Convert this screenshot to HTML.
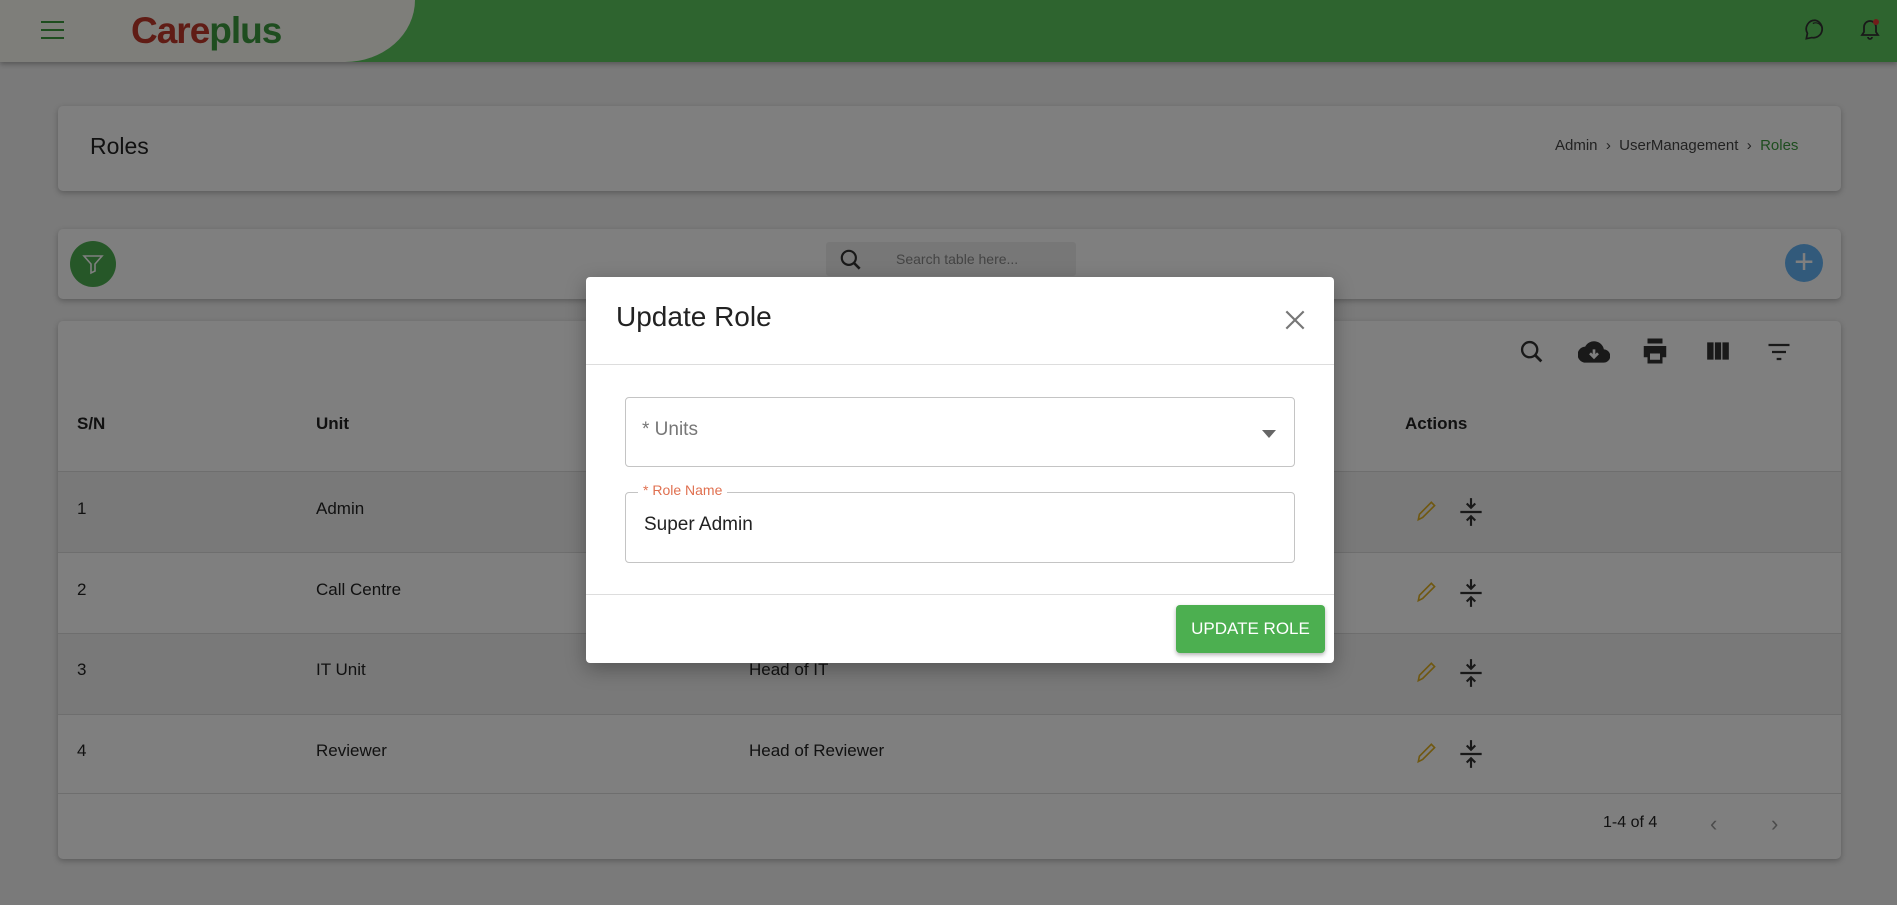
<!DOCTYPE html>
<html><head><meta charset="utf-8"><style>
*{box-sizing:border-box;margin:0;padding:0}
body{width:1897px;height:905px;overflow:hidden;background:#f4f4f4;font-family:"Liberation Sans",sans-serif;color:#222;position:relative}
.abs{position:absolute}
.card{position:absolute;background:#fff;border-radius:5px;box-shadow:0 2px 6px rgba(0,0,0,.25)}
.overlay{position:absolute;left:0;top:0;width:1897px;height:905px;background:rgba(0,0,0,.5)}
.t{position:absolute;font-size:17px;white-space:nowrap}
.row{position:absolute;left:58px;width:1783px;border-top:1px solid #ddd}
</style></head><body>
<!-- header -->
<div class="abs" style="left:0;top:0;width:1897px;height:62px;background:#5cc85f;box-shadow:0 2px 5px rgba(0,0,0,.3)"></div>
<div class="abs" style="left:0;top:0;width:415px;height:62px;background:#fcfdf5;border-bottom-right-radius:70px 62px"></div>
<div class="abs" style="left:41px;top:21px;width:23px;height:2px;background:#3c9a3f;box-shadow:0 8px 0 #3c9a3f,0 16px 0 #3c9a3f"></div>
<div class="t" style="left:131px;top:10px;font-size:37px;font-weight:bold;letter-spacing:-1px"><span style="color:#c0392b">Care</span><span style="color:#3c9a3f">plus</span></div>
<svg class="abs" style="left:1802px;top:17px" width="26" height="26" viewBox="0 0 24 24"><path d="M12 3a8 8 0 0 0-7 12l-1 5 5-1a8 8 0 1 0 3-16z" fill="none" stroke="#333" stroke-width="1.6"/><path d="M10 6a6 6 0 0 1 8 8" fill="none" stroke="#333" stroke-width="1.2"/></svg>
<svg class="abs" style="left:1858px;top:18px" width="24" height="24" viewBox="0 0 24 24"><path d="M12 3a6 6 0 0 0-6 6v5l-2 3h16l-2-3V9a6 6 0 0 0-6-6zM10 19a2 2 0 0 0 4 0" fill="none" stroke="#333" stroke-width="1.8"/><circle cx="18" cy="4" r="3" fill="#e53935"/></svg>
<!-- roles card -->
<div class="card" style="left:58px;top:106px;width:1783px;height:85px"></div>
<div class="t" style="left:90px;top:133px;font-size:23px">Roles</div>
<div class="t" style="left:1555px;top:137px;font-size:15px;color:#444">Admin &nbsp;›&nbsp; UserManagement &nbsp;›&nbsp; <span style="color:#3c9a3f">Roles</span></div>
<!-- toolbar card -->
<div class="card" style="left:58px;top:229px;width:1783px;height:70px"></div>
<div class="abs" style="left:70px;top:241px;width:46px;height:46px;border-radius:50%;background:#4caf50"></div>
<svg class="abs" style="left:81px;top:252px" width="24" height="24" viewBox="0 0 24 24"><path d="M3 4h18l-7 8v7l-4 2v-9z" fill="none" stroke="#fff" stroke-width="1.6"/></svg>
<div class="abs" style="left:826px;top:242px;width:250px;height:34px;background:#eee;border-radius:3px"></div>
<svg class="abs" style="left:838px;top:247px" width="26" height="26" viewBox="0 0 24 24"><circle cx="10" cy="10" r="6.5" fill="none" stroke="#333" stroke-width="2"/><path d="M15 15l5 5" stroke="#333" stroke-width="2.4"/></svg>
<div class="t" style="left:896px;top:251px;font-size:14px;color:#888">Search table here...</div>
<div class="abs" style="left:1785px;top:244px;width:38px;height:38px;border-radius:50%;background:#64b5f6;color:#fff;font-size:34px;line-height:36px;text-align:center">+</div>
<!-- table card -->
<div class="card" style="left:58px;top:321px;width:1783px;height:538px"></div>
<svg class="abs" style="left:1518px;top:338px" width="28" height="28" viewBox="0 0 24 24"><circle cx="10" cy="10" r="6.5" fill="none" stroke="#333" stroke-width="2"/><path d="M15 15l5 5" stroke="#333" stroke-width="2.4"/></svg>
<svg class="abs" style="left:1578px;top:336px" width="32" height="32" viewBox="0 0 24 24"><path d="M19.4 10A7.5 7.5 0 0 0 5.4 8 6 6 0 0 0 6 20h13a5 5 0 0 0 .4-10z" fill="#333"/><path d="M12 10v6M9 13l3 3 3-3" stroke="#fff" stroke-width="2" fill="none"/></svg>
<svg class="abs" style="left:1640px;top:336px" width="30" height="30" viewBox="0 0 24 24"><path d="M6 2h12v4H6zM3 8h18v9h-3v5H6v-5H3z" fill="#333"/><rect x="8" y="14" width="8" height="5" fill="#fff"/></svg>
<svg class="abs" style="left:1705px;top:338px" width="26" height="26" viewBox="0 0 24 24"><path d="M2 4h6v16H2zM9 4h6v16H9zM16 4h6v16h-6z" fill="#333"/><path d="M8.5 4v16M15.5 4v16" stroke="#fff"/></svg>
<svg class="abs" style="left:1765px;top:338px" width="28" height="28" viewBox="0 0 24 24"><path d="M3 6h18M6 12h12M10 18h4" stroke="#333" stroke-width="2"/></svg>
<div class="t" style="left:77px;top:414px;font-weight:bold">S/N</div>
<div class="t" style="left:316px;top:414px;font-weight:bold">Unit</div>
<div class="t" style="left:1405px;top:414px;font-weight:bold">Actions</div>
<div class="row" style="top:471px;height:81px;background:#f2f2f2"></div>
<div class="row" style="top:552px;height:81px"></div>
<div class="row" style="top:633px;height:81px;background:#f2f2f2"></div>
<div class="row" style="top:714px;height:80px;border-bottom:1px solid #ddd"></div>
<div class="t" style="left:77px;top:499px">1</div><div class="t" style="left:316px;top:499px">Admin</div>
<div class="t" style="left:77px;top:580px">2</div><div class="t" style="left:316px;top:580px">Call Centre</div>
<div class="t" style="left:77px;top:660px">3</div><div class="t" style="left:316px;top:660px">IT Unit</div><div class="t" style="left:749px;top:660px">Head of IT</div>
<div class="t" style="left:77px;top:741px">4</div><div class="t" style="left:316px;top:741px">Reviewer</div><div class="t" style="left:749px;top:741px">Head of Reviewer</div>
<svg class="abs" style="left:1414px;top:498px" width="26" height="26" viewBox="0 0 24 24"><path d="M4 20l1-5L16 4l3 3L8 18z" fill="none" stroke="#e0b020" stroke-width="1.5"/></svg>
<svg class="abs" style="left:1414px;top:579px" width="26" height="26" viewBox="0 0 24 24"><path d="M4 20l1-5L16 4l3 3L8 18z" fill="none" stroke="#e0b020" stroke-width="1.5"/></svg>
<svg class="abs" style="left:1414px;top:659px" width="26" height="26" viewBox="0 0 24 24"><path d="M4 20l1-5L16 4l3 3L8 18z" fill="none" stroke="#e0b020" stroke-width="1.5"/></svg>
<svg class="abs" style="left:1414px;top:740px" width="26" height="26" viewBox="0 0 24 24"><path d="M4 20l1-5L16 4l3 3L8 18z" fill="none" stroke="#e0b020" stroke-width="1.5"/></svg>
<svg class="abs" style="left:1458px;top:496px" width="26" height="32" viewBox="0 0 24 30"><path d="M12 2v9M8 7l4 4 4-4M2 15h20M12 28v-9M8 23l4-4 4 4" fill="none" stroke="#333" stroke-width="2"/></svg>
<svg class="abs" style="left:1458px;top:577px" width="26" height="32" viewBox="0 0 24 30"><path d="M12 2v9M8 7l4 4 4-4M2 15h20M12 28v-9M8 23l4-4 4 4" fill="none" stroke="#333" stroke-width="2"/></svg>
<svg class="abs" style="left:1458px;top:657px" width="26" height="32" viewBox="0 0 24 30"><path d="M12 2v9M8 7l4 4 4-4M2 15h20M12 28v-9M8 23l4-4 4 4" fill="none" stroke="#333" stroke-width="2"/></svg>
<svg class="abs" style="left:1458px;top:738px" width="26" height="32" viewBox="0 0 24 30"><path d="M12 2v9M8 7l4 4 4-4M2 15h20M12 28v-9M8 23l4-4 4 4" fill="none" stroke="#333" stroke-width="2"/></svg>
<div class="t" style="left:1603px;top:814px;font-size:16px">1-4 of 4</div>
<div class="t" style="left:1710px;top:811px;font-size:22px;color:#999">‹</div>
<div class="t" style="left:1771px;top:811px;font-size:22px;color:#999">›</div>
<div class="overlay"></div>
<!-- modal -->
<div class="abs" style="left:586px;top:277px;width:748px;height:386px;background:#fff;border-radius:4px;box-shadow:0 6px 20px rgba(0,0,0,.3)">
 <div class="t" style="left:30px;top:24px;font-size:28px;color:#222">Update Role</div>
 <svg class="abs" style="left:696px;top:30px" width="26" height="26" viewBox="0 0 24 24"><path d="M4 4l16 16M20 4L4 20" stroke="#777" stroke-width="2"/></svg>
 <div class="abs" style="left:0;top:87px;width:748px;height:1px;background:#ddd"></div>
 <div class="abs" style="left:39px;top:120px;width:670px;height:70px;border:1px solid #c4c4c4;border-radius:4px"></div>
 <div class="t" style="left:56px;top:142px;font-size:19px;color:#777">* Units</div>
 <div class="abs" style="left:676px;top:153px;width:0;height:0;border-left:7px solid transparent;border-right:7px solid transparent;border-top:8px solid #666"></div>
 <div class="abs" style="left:39px;top:215px;width:670px;height:71px;border:1px solid #c4c4c4;border-radius:4px"></div>
 <div class="t" style="left:52px;top:205px;font-size:14px;color:#e07050;background:#fff;padding:0 5px">* Role Name</div>
 <div class="t" style="left:58px;top:237px;font-size:19px;color:#222">Super Admin</div>
 <div class="abs" style="left:0;top:317px;width:748px;height:1px;background:#ddd"></div>
 <div class="abs" style="left:590px;top:328px;width:149px;height:48px;background:#4caf50;border-radius:4px;box-shadow:0 2px 4px rgba(0,0,0,.3);color:#fff;font-size:17px;line-height:48px;text-align:center">UPDATE ROLE</div>
</div>
</body></html>
